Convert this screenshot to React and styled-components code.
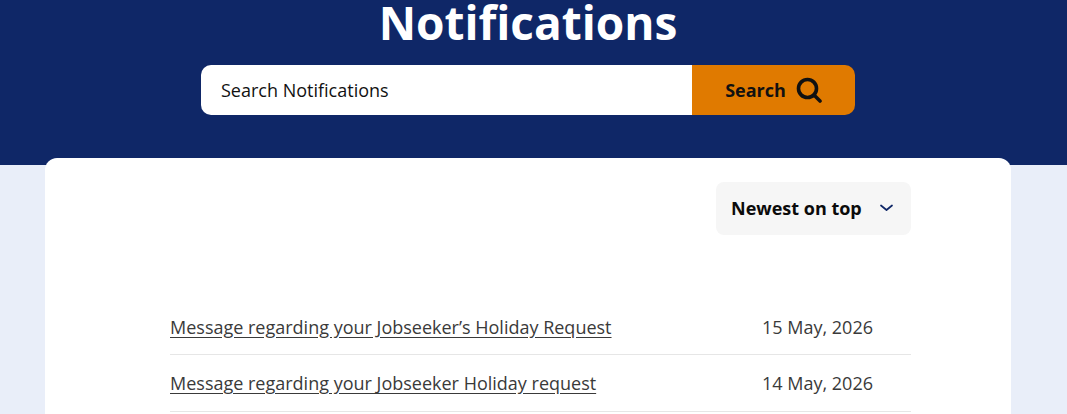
import React from "react";
import styled, { createGlobalStyle } from "styled-components";

const GlobalStyle = createGlobalStyle`
  html, body {
    margin: 0;
    padding: 0;
    height: 414px;
    overflow: hidden;
    background: #e9eef9;
    font-family: "Open Sans", "Liberation Sans", sans-serif;
  }
`;

const Hero = styled.header`
  height: 165px;
  padding-right: 11px;
  background: #0f2767;
  display: flex;
  flex-direction: column;
  align-items: center;
`;

const Title = styled.h1`
  margin: -8px 0 0;
  height: 73px;
  line-height: 60px;
  font-size: 46px;
  font-weight: 700;
  color: #fff;
`;

const SearchForm = styled.form`
  display: flex;
  width: 654px;
  height: 50px;
`;

const SearchInput = styled.div`
  flex: 1;
  display: flex;
  align-items: center;
  padding-left: 20px;
  background: #fff;
  border-radius: 10px 0 0 10px;
  font-size: 18px;
  color: #111;
`;

const SearchButton = styled.button`
  width: 163px;
  display: flex;
  align-items: center;
  justify-content: center;
  gap: 10px;
  padding: 0;
  border: 0;
  background: #e07a00;
  border-radius: 0 10px 10px 0;
  font-family: inherit;
  font-size: 18px;
  font-weight: 700;
  color: #111;
`;

const Card = styled.main`
  margin: -7px 56px 0 45px;
  height: 300px;
  padding: 24px 100px 0 125px;
  background: #fff;
  border-radius: 12px 12px 0 0;
`;

const SortRow = styled.div`
  display: flex;
  justify-content: flex-end;
  margin-bottom: 64px;
`;

const SortSelect = styled.div`
  width: 195px;
  height: 53px;
  box-sizing: border-box;
  display: flex;
  align-items: center;
  justify-content: space-between;
  padding: 0 18px 2px 15px;
  background: #f6f6f6;
  border-radius: 8px;
  font-size: 18px;
  font-weight: 700;
  color: #0b0b0b;
`;

const Row = styled.div`
  height: ${(p) => (p.$first ? "55px" : "56px")};
  display: flex;
  align-items: center;
  justify-content: space-between;
  padding-right: 38px;
  border-bottom: 1px solid #e6e6e6;
  font-size: 18px;
  color: #3a3a3a;
`;

const RowLink = styled.a`
  color: inherit;
  text-decoration: underline;
  text-underline-offset: 3px;
`;

const SearchIcon = () => (
  <svg width="26" height="26" viewBox="0 0 26 26" fill="none" stroke="#111" strokeWidth="3.6" strokeLinecap="round">
    <circle cx="11.5" cy="11.5" r="9" />
    <path d="M18 18l6 6" />
  </svg>
);

const ChevronIcon = () => (
  <svg width="13" height="8" viewBox="0 0 13 8" fill="none" stroke="#0f2767" strokeWidth="1.7" strokeLinecap="round" strokeLinejoin="round">
    <path d="M1 1.5l5.5 4.5 5.5-4.5" />
  </svg>
);

const notifications = [
  { title: "Message regarding your Jobseeker’s Holiday Request", date: "15 May, 2026" },
  { title: "Message regarding your Jobseeker Holiday request", date: "14 May, 2026" },
];

const App = () => {
  return (
    <>
      <GlobalStyle />
      <Hero>
        <Title>Notifications</Title>
        <SearchForm>
          <SearchInput>Search Notifications</SearchInput>
          <SearchButton type="button">
            Search
            <SearchIcon />
          </SearchButton>
        </SearchForm>
      </Hero>
      <Card>
        <SortRow>
          <SortSelect>
            Newest on top
            <ChevronIcon />
          </SortSelect>
        </SortRow>
        {notifications.map((n, i) => (
          <Row key={n.date} $first={i === 0}>
            <RowLink href="#">{n.title}</RowLink>
            <span>{n.date}</span>
          </Row>
        ))}
      </Card>
    </>
  );
};

export default App;
